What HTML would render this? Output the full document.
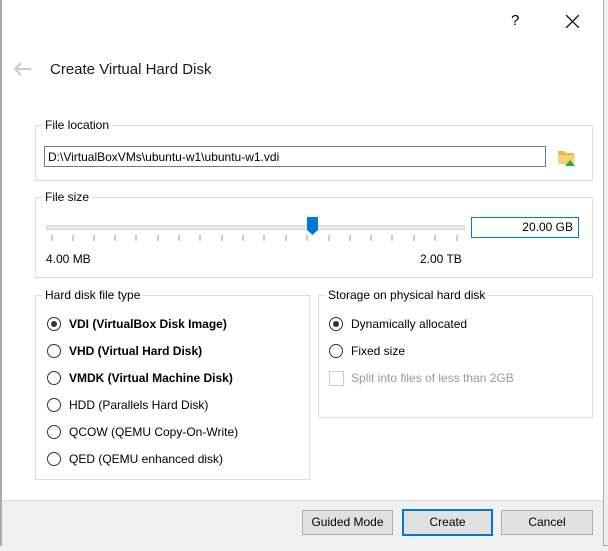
<!DOCTYPE html>
<html><head><style>
body{margin:0;width:608px;height:550px;background:#fff;font-family:"Liberation Sans",sans-serif;font-size:12px;color:#000;position:relative;overflow:hidden}
.a{position:absolute}
.grp{position:absolute;border:1px solid #dcdcdc}
.lg{position:absolute;background:#fff;padding:0 3px;top:-9px;left:6px;line-height:16px}
.rad{position:absolute;width:12px;height:12px;border:1px solid #333;border-radius:50%;background:#fff}
.rad.on::after{content:"";position:absolute;left:3px;top:3px;width:6px;height:6px;border-radius:50%;background:#333}
.btn{position:absolute;top:510px;height:23px;background:#e1e1e1;border:1px solid #adadad;text-align:center;line-height:23px}
</style></head><body>
<div class="a" style="left:0;top:0;width:2px;height:550px;background:#aaa"></div>
<div class="a" style="left:603px;top:0;width:5px;height:550px;background:#f0f0f0;border-left:1px solid #aaa"></div>
<div class="a" style="left:0;top:545px;width:608px;height:5px;background:#f0f0f0;border-top:1px solid #aaa"></div>
<div class="a" style="left:511px;top:12px;font-size:15px">?</div>
<svg class="a" style="left:566px;top:15px" width="13" height="13"><path d="M0 0L13 13M13 0L0 13" stroke="#000" stroke-width="1.2"/></svg>
<svg class="a" style="left:14px;top:62px" width="18" height="14"><path d="M1 7H17M1 7L7 1M1 7L7 13" stroke="#c8c8c8" stroke-width="2" fill="none"/></svg>
<div class="a" style="left:50px;top:61px;font-size:15px;color:#1a1a1a">Create Virtual Hard Disk</div>

<div class="grp" style="left:35px;top:125px;width:556px;height:54px"><span class="lg">File location</span></div>
<div class="a" style="left:44px;top:146px;height:21px;border:1px solid #7a7a7a;line-height:20px;padding-left:3px;box-sizing:border-box;width:502px">D:\VirtualBoxVMs\ubuntu-w1\ubuntu-w1.vdi</div>
<svg class="a" style="left:556px;top:146px" width="22" height="22"><path d="M2 5h6l2 2h8v10H2z" fill="#e8b84a"/><path d="M2 9h17l-1 9H2z" fill="#f5d27a"/><path d="M9 20l5-6 5 6z" fill="#3aa33a"/></svg>

<div class="grp" style="left:35px;top:197px;width:556px;height:79px"><span class="lg">File size</span></div>
<div class="a" style="left:46px;top:225px;width:417px;height:3px;background:#e7e7e7;border:1px solid #d6d6d6"></div>
<svg class="a" style="left:307px;top:217px" width="12" height="19"><path d="M0 0h11v13l-5.5 5L0 13z" fill="#0078d7"/></svg>
<svg class="a" style="left:46px;top:235px" width="420" height="6">
<g stroke="#999"><path d="M6 0v6M27 0v6M48 0v6M69 0v6M90 0v6M112 0v6M133 0v6M154 0v6M176 0v6M197 0v6M218 0v6M240 0v6M261 0v6M283 0v6M304 0v6M325 0v6M346 0v6M368 0v6M389 0v6M411 0v6"/></g></svg>
<div class="a" style="left:471px;top:217px;width:108px;height:21px;border:1px solid #0078d7;box-sizing:border-box;text-align:right;line-height:19px;padding-right:5px">20.00 GB</div>
<div class="a" style="left:46px;top:252px">4.00 MB</div>
<div class="a" style="left:420px;top:252px">2.00 TB</div>

<div class="grp" style="left:35px;top:295px;width:273px;height:183px"><span class="lg">Hard disk file type</span></div>
<div class="rad on" style="left:47px;top:317px"></div><div class="a" style="left:69px;top:317px;font-weight:bold">VDI (VirtualBox Disk Image)</div>
<div class="rad" style="left:47px;top:344px"></div><div class="a" style="left:69px;top:344px;font-weight:bold">VHD (Virtual Hard Disk)</div>
<div class="rad" style="left:47px;top:371px"></div><div class="a" style="left:69px;top:371px;font-weight:bold">VMDK (Virtual Machine Disk)</div>
<div class="rad" style="left:47px;top:398px"></div><div class="a" style="left:69px;top:398px">HDD (Parallels Hard Disk)</div>
<div class="rad" style="left:47px;top:425px"></div><div class="a" style="left:69px;top:425px">QCOW (QEMU Copy-On-Write)</div>
<div class="rad" style="left:47px;top:452px"></div><div class="a" style="left:69px;top:452px">QED (QEMU enhanced disk)</div>

<div class="grp" style="left:318px;top:295px;width:273px;height:121px"><span class="lg">Storage on physical hard disk</span></div>
<div class="rad on" style="left:329px;top:317px"></div><div class="a" style="left:351px;top:317px">Dynamically allocated</div>
<div class="rad" style="left:329px;top:344px"></div><div class="a" style="left:351px;top:344px">Fixed size</div>
<div class="a" style="left:329px;top:371px;width:13px;height:13px;border:1px solid #ccc"></div><div class="a" style="left:351px;top:371px;color:#999">Split into files of less than 2GB</div>

<div class="a" style="left:2px;top:500px;width:601px;height:45px;background:#f0f0f0;border-top:1px solid #dfdfdf"></div>
<div class="btn" style="left:302px;width:89px">Guided Mode</div>
<div class="btn" style="left:402px;width:87px;border:2px solid #0078d7;top:509px">Create</div>
<div class="btn" style="left:501px;width:90px">Cancel</div>
</body></html>
